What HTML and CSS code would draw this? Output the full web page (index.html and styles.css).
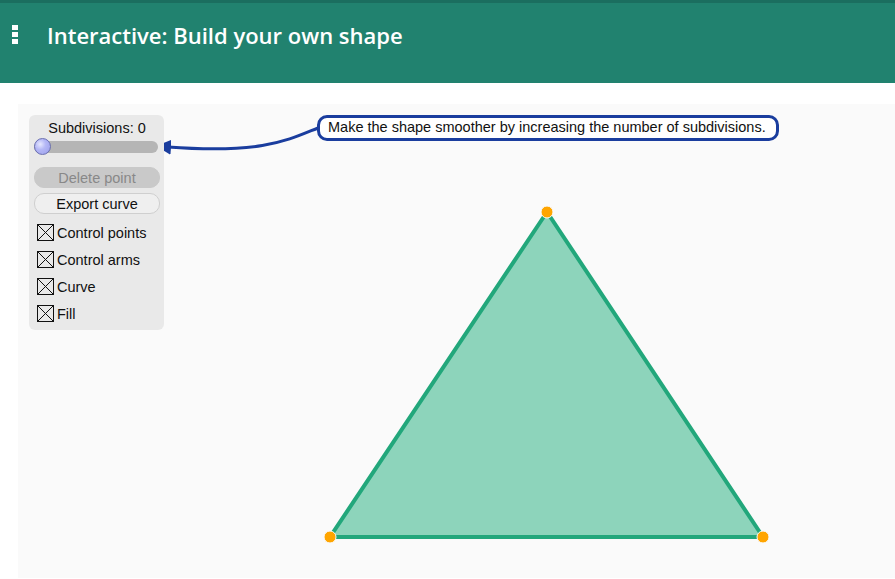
FILE: index.html
```html
<!DOCTYPE html>
<html lang="en">
<head>
    <meta charset="UTF-8">
    <meta name="viewport" content="width=device-width, initial-scale=1.0">
    <title>Interactive: Build your own shape</title>
    <link rel="stylesheet" href="styles.css">
</head>
<body>

    <!-- Header -->
    <header class="top-bar">
        <div class="menu-dots"><span></span><span></span><span></span></div>
        <h1 class="title">Interactive: Build your own shape</h1>
    </header>

    <!-- Drawing area -->
    <main class="stage">
        <div class="canvas">
            <svg class="drawing" width="877" height="474" viewBox="0 0 877 474">
                <defs>
                    <marker id="arrow-head" viewBox="0 0 10 10" refX="2" refY="5" markerWidth="5" markerHeight="5" orient="auto-start-reverse">
                        <path d="M0 0 L10 5 L0 10 Z" fill="#1a3d9e"></path>
                    </marker>
                </defs>
                <polygon points="529,108 312,433 745,433" fill="#8dd4bb" stroke="#22a77b" stroke-width="4" stroke-linejoin="miter"></polygon>
                <circle cx="529" cy="108" r="6" fill="#ffa500" stroke="#fafafa" stroke-width="1"></circle>
                <circle cx="312" cy="433" r="6" fill="#ffa500" stroke="#fafafa" stroke-width="1"></circle>
                <circle cx="745" cy="433" r="6" fill="#ffa500" stroke="#fafafa" stroke-width="1"></circle>
                <path d="M300 24 C 270 36, 245 50, 150 43" fill="none" stroke="#1a3d9e" stroke-width="3" marker-end="url(#arrow-head)"></path>
            </svg>

            <!-- Control panel -->
            <div class="panel">
                <div class="panel-label">Subdivisions: 0</div>
                <div class="slider"><span class="slider-thumb"></span></div>
                <button class="panel-btn disabled">Delete point</button>
                <button class="panel-btn">Export curve</button>
                <label class="check"><span class="box"></span>Control points</label>
                <label class="check"><span class="box"></span>Control arms</label>
                <label class="check"><span class="box"></span>Curve</label>
                <label class="check"><span class="box"></span>Fill</label>
            </div>

            <!-- Hint -->
            <div class="hint">Make the shape smoother by increasing the number of subdivisions.</div>
        </div>
    </main>

</body>
</html>
```

FILE: styles.css
```css
/* Page */
body {
    margin: 0;
    background: #ffffff;
    font-family: "Liberation Sans", Arial, sans-serif;
}

/* Header */
.top-bar {
    height: 83px;
    box-sizing: border-box;
    border-top: 3px solid #1b6e5f;
    background: #21826f;
    display: flex;
    align-items: flex-start;
    padding-top: 17px;
}

.menu-dots {
    display: flex;
    flex-direction: column;
    gap: 2px;
    margin: 5px 0 0 12px;
}

.menu-dots span {
    display: block;
    width: 6px;
    height: 5px;
    background: #ffffff;
}

.title {
    margin: 0 0 0 29px;
    color: #ffffff;
    font-family: "Open Sans", sans-serif;
    font-weight: 600;
    font-size: 22px;
    line-height: 30px;
}

/* Stage */
.stage {
    padding: 21px 0 0 18px;
}

.canvas {
    position: relative;
    width: 877px;
    height: 474px;
    background: #fafafa;
}

.drawing {
    display: block;
}

/* Control panel */
.panel {
    position: absolute;
    left: 11px;
    top: 11px;
    width: 135px;
    box-sizing: border-box;
    padding: 5px 4px 3px 5px;
    background: #e9e9e9;
    border-radius: 6px;
    font-size: 14.5px;
    color: #111;
}

.panel-label {
    text-align: center;
    line-height: 16px;
}

.slider {
    position: relative;
    height: 12px;
    margin: 5px 2px 14px 0;
    background: #b5b5b5;
    border-radius: 6px;
}

.slider-thumb {
    position: absolute;
    left: 0;
    top: -3px;
    width: 17px;
    height: 17px;
    box-sizing: border-box;
    border-radius: 50%;
    border: 1px solid #6a6fb0;
    background: radial-gradient(circle at 35% 35%, #e6e8ff 0, #b4b7f6 40%, #9a9eea 100%);
}

.panel-btn {
    display: block;
    width: 126px;
    height: 21px;
    margin-bottom: 5px;
    padding: 0;
    border: 1px solid #cfcfcf;
    border-radius: 10px;
    background: #efefef;
    font-family: "Liberation Sans", Arial, sans-serif;
    font-size: 14.5px;
    color: #111;
}

.panel-btn.disabled {
    border-color: #c9c9c9;
    background: #c9c9c9;
    color: #888888;
}

.check {
    display: flex;
    align-items: center;
    height: 27px;
    margin-left: 3px;
}

.check:first-of-type {
    margin-top: 3px;
}

.box {
    width: 17px;
    height: 17px;
    margin-right: 3px;
    box-sizing: border-box;
    border: 1px solid #111;
    background:
        linear-gradient(45deg, transparent calc(50% - 0.6px), #111 50%, transparent calc(50% + 0.6px)),
        linear-gradient(-45deg, transparent calc(50% - 0.6px), #111 50%, transparent calc(50% + 0.6px));
}

/* Hint bubble */
.hint {
    position: absolute;
    left: 299px;
    top: 11px;
    padding: 1px 10px 2px 8px;
    border: 3px solid #1a3d9e;
    border-radius: 10px;
    background: #ffffff;
    font-size: 14.5px;
    line-height: 17px;
    color: #111;
    white-space: nowrap;
}
```
